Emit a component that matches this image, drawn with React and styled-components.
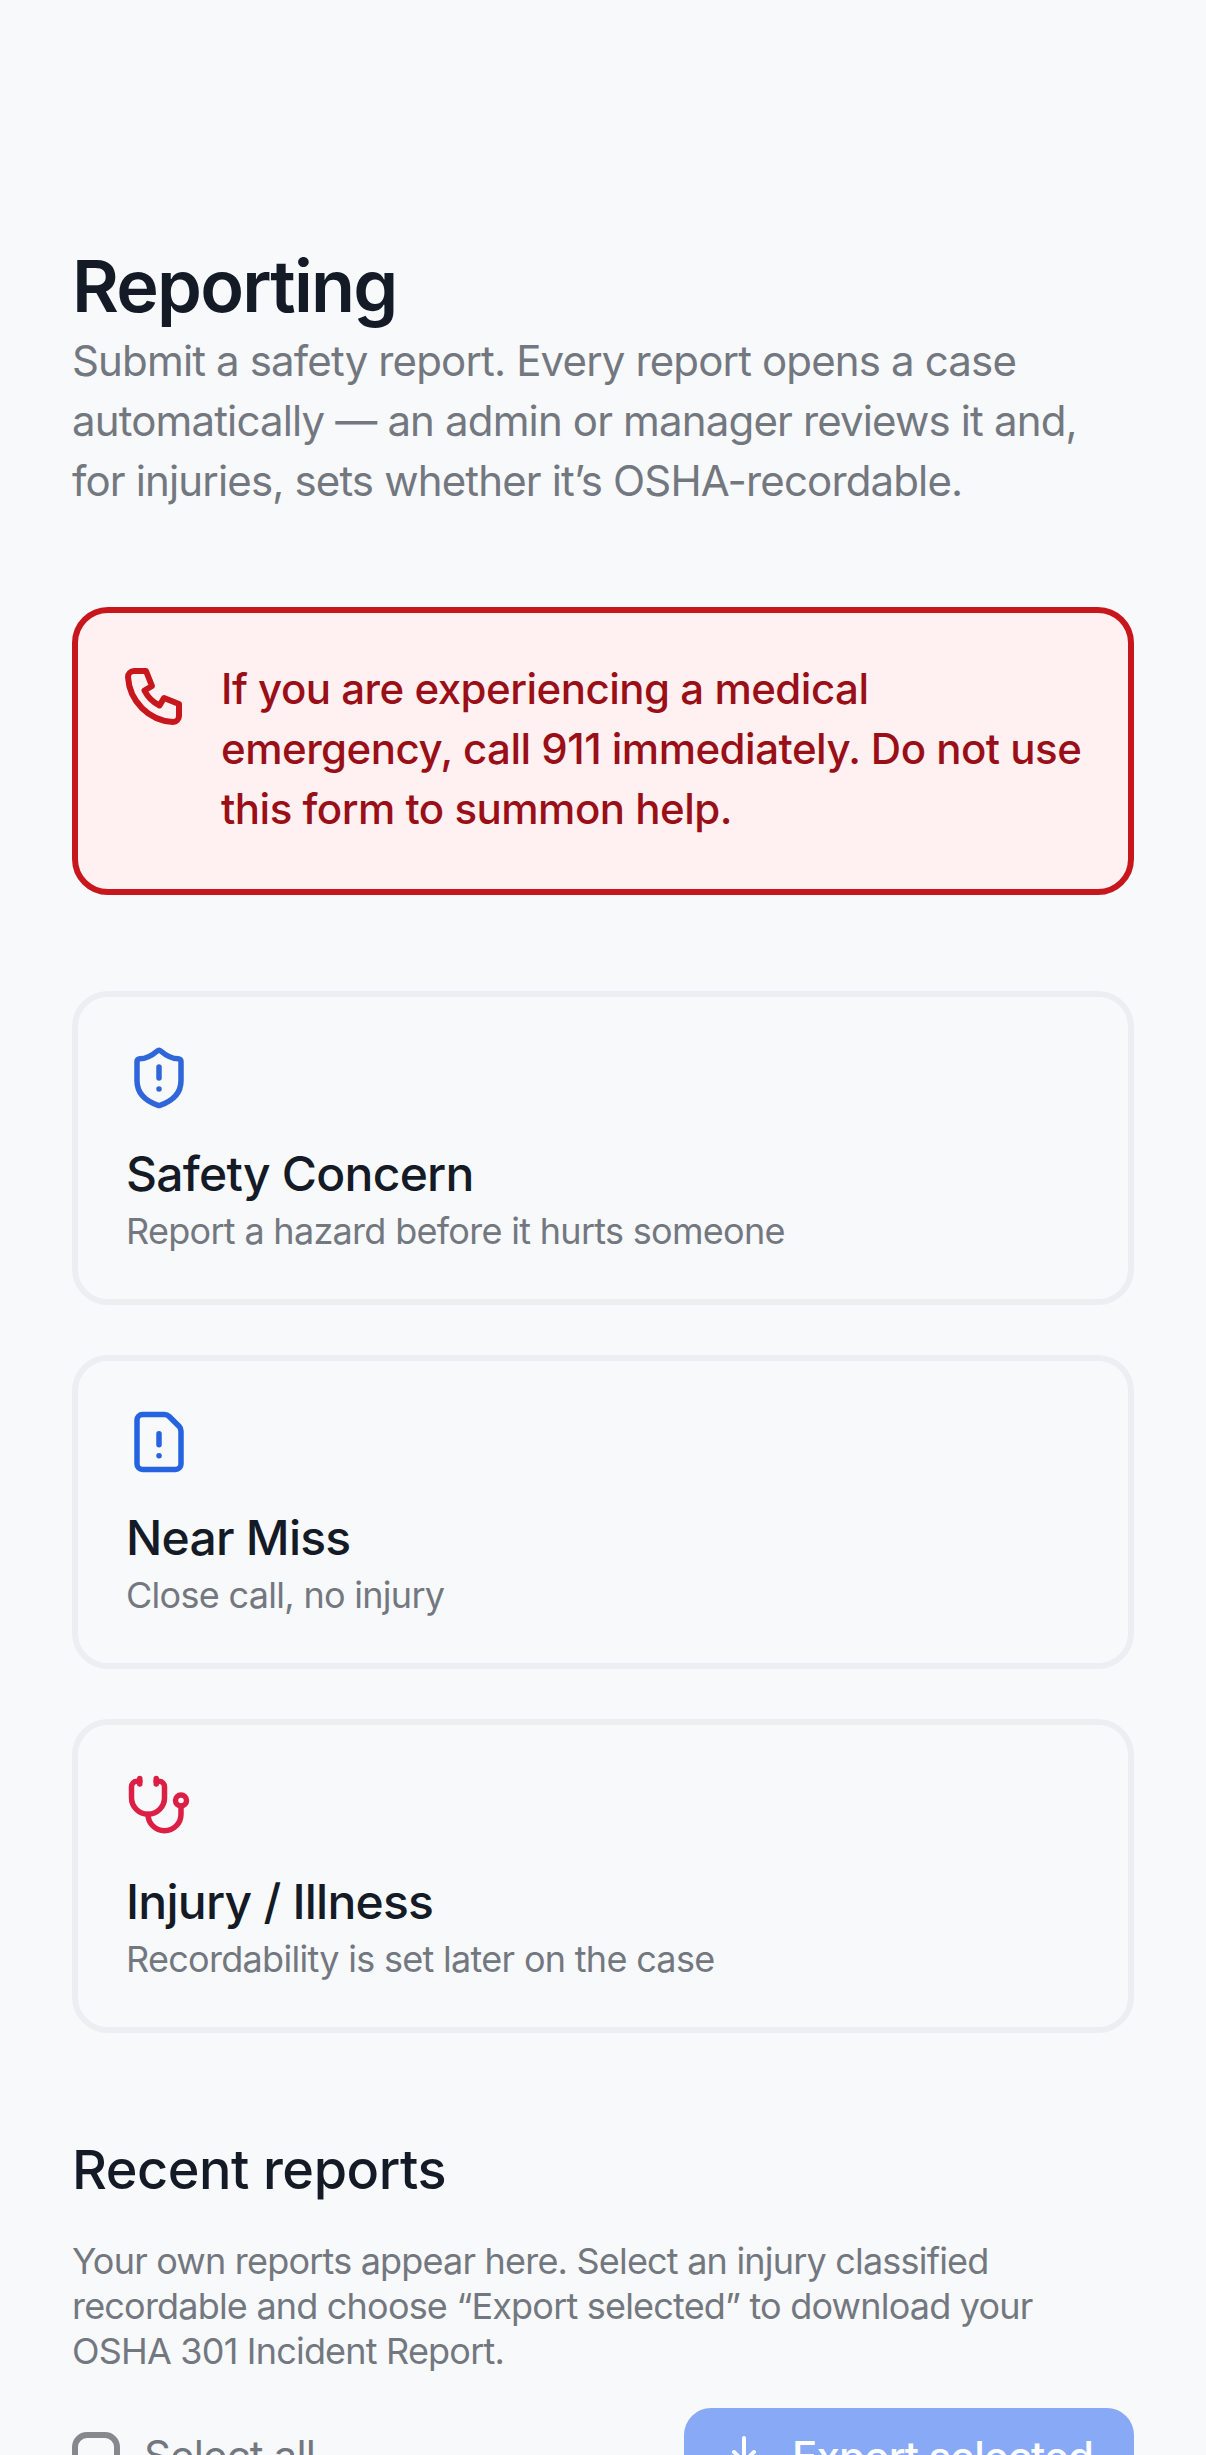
import styled, { createGlobalStyle } from "styled-components";
import { Download, FileWarning, ShieldAlert, Stethoscope } from "lucide-react";

const GlobalStyle = createGlobalStyle`
  html, body {
    margin: 0;
    height: 2455px;
    overflow: hidden;
    background: #f8f9fb;
  }
  body {
    font-family: Inter, "Liberation Sans", sans-serif;
  }
`;

const Page = styled.main`
  height: 2455px;
  overflow: hidden;
  box-sizing: border-box;
  padding: 241px 72px 0;
  background: #f8f9fb;
`;

const Title = styled.h1`
  margin: 0;
  font-size: 72px;
  line-height: 90px;
  font-weight: 600;
  letter-spacing: -1.8px;
  color: #141b26;
`;

const Lead = styled.p`
  margin: 0;
  font-size: 42px;
  line-height: 60px;
  letter-spacing: -0.85px;
  color: #737880;
`;

const Alert = styled.div`
  margin-top: 96px;
  box-sizing: border-box;
  height: 288px;
  display: flex;
  gap: 30px;
  padding: 46px 41px;
  background: #fff1f1;
  border: 6px solid #c8161d;
  border-radius: 36px;
`;

const AlertIcon = styled.svg`
  flex: none;
  width: 72px;
  height: 72px;
  color: #c8161d;
`;

const AlertText = styled.p`
  margin: 0;
  font-size: 42px;
  line-height: 60px;
  font-weight: 500;
  letter-spacing: -0.5px;
  color: #9a0f17;
`;

const Cards = styled.div`
  margin-top: 96px;
  display: flex;
  flex-direction: column;
  gap: 50px;
`;

const Card = styled.div`
  box-sizing: border-box;
  height: 314px;
  padding: 48px 48px 0;
  border: 6px solid #eceef1;
  border-radius: 36px;
  display: flex;
  flex-direction: column;
`;

const CardIcon = styled.div`
  height: 66px;
  color: ${(p) => p.$color};
`;

const CardTitle = styled.h3`
  margin: 33px 0 0;
  font-size: 48px;
  line-height: 60px;
  font-weight: 500;
  letter-spacing: -0.75px;
  color: #141b26;
`;

const CardText = styled.p`
  margin: 3px 0 0;
  font-size: 36px;
  line-height: 48px;
  letter-spacing: -0.7px;
  color: #737880;
`;

const SectionTitle = styled.h2`
  margin: 101px 0 0;
  font-size: 54px;
  line-height: 72px;
  font-weight: 500;
  letter-spacing: -0.45px;
  color: #141b26;
`;

const Note = styled.p`
  margin: 33px 0 0;
  font-size: 36px;
  line-height: 45px;
  letter-spacing: -0.8px;
  color: #737880;
`;

const Toolbar = styled.div`
  margin-top: 34px;
  display: flex;
  align-items: center;
  justify-content: space-between;
`;

const SelectAll = styled.label`
  display: flex;
  align-items: center;
  gap: 24px;
  font-size: 42px;
  line-height: 60px;
  letter-spacing: -0.85px;
  color: #737880;
`;

const Check = styled.span`
  width: 48px;
  height: 48px;
  box-sizing: border-box;
  border: 6px solid #85888d;
  border-radius: 15px;
`;

const ExportButton = styled.button`
  height: 96px;
  width: 450px;
  padding: 0 36px;
  display: flex;
  align-items: center;
  gap: 24px;
  border: 0;
  border-radius: 27px;
  background: #87a9f6;
  color: #fff;
  font: 500 42px Inter, "Liberation Sans", sans-serif;
  letter-spacing: -0.85px;
`;

const reportTypes = [
  { title: "Safety Concern", text: "Report a hazard before it hurts someone", Icon: ShieldAlert, color: "#2f66d9" },
  { title: "Near Miss", text: "Close call, no injury", Icon: FileWarning, color: "#2563e0" },
  { title: "Injury / Illness", text: "Recordability is set later on the case", Icon: Stethoscope, color: "#dc1f45" },
];

export default function App() {
  return (
    <>
      <GlobalStyle />
      <Page>
        <Title>Reporting</Title>
        <Lead>
          Submit a safety report. Every report opens a case automatically — an admin or manager reviews it and, for
          injuries, sets whether it’s OSHA-recordable.
        </Lead>
        <Alert>
          <AlertIcon viewBox="0 0 24 24" fill="none" stroke="currentColor" strokeWidth="2" strokeLinecap="round" strokeLinejoin="round">
            <path d="M5 4h4l2 5l-2.5 1.5a11 11 0 0 0 5 5l1.5 -2.5l5 2v4a2 2 0 0 1 -2 2a16 16 0 0 1 -15 -15a2 2 0 0 1 2 -2" />
          </AlertIcon>
          <AlertText>If you are experiencing a medical emergency, call 911 immediately. Do not use this form to summon help.</AlertText>
        </Alert>
        <Cards>
          {reportTypes.map(({ title, text, Icon, color }) => (
            <Card key={title}>
              <CardIcon $color={color}>
                <Icon size={66} strokeWidth={2} />
              </CardIcon>
              <CardTitle>{title}</CardTitle>
              <CardText>{text}</CardText>
            </Card>
          ))}
        </Cards>
        <SectionTitle>Recent reports</SectionTitle>
        <Note>
          Your own reports appear here. Select an injury classified recordable and choose “Export selected” to download
          your OSHA 301 Incident Report.
        </Note>
        <Toolbar>
          <SelectAll>
            <Check />
            Select all
          </SelectAll>
          <ExportButton>
            <Download size={48} strokeWidth={2} />
            Export selected
          </ExportButton>
        </Toolbar>
      </Page>
    </>
  );
}
